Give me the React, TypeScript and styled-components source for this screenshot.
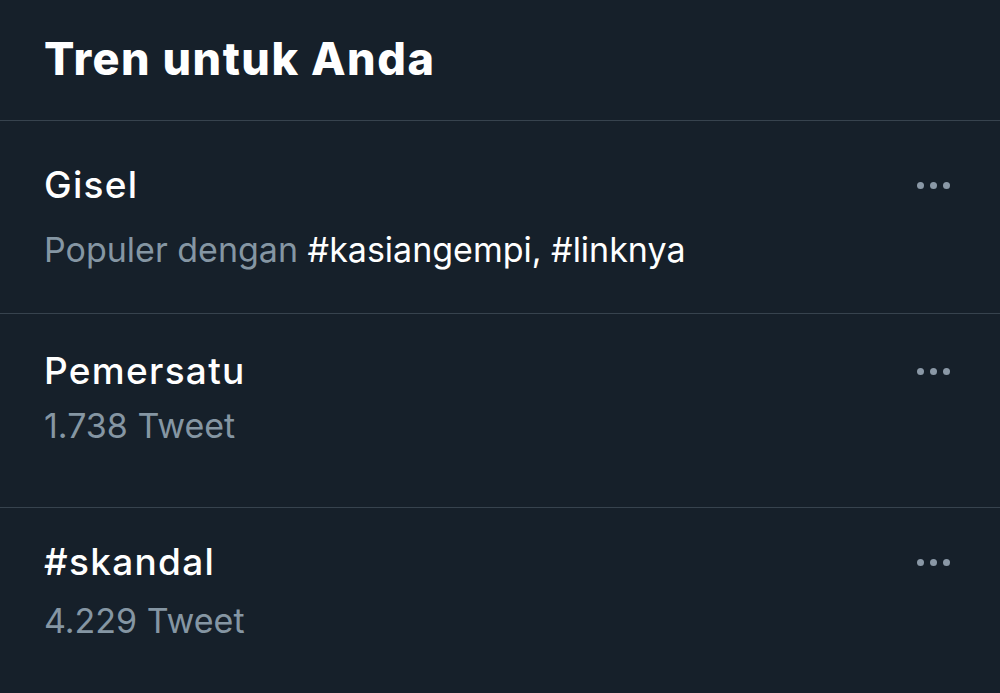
import React from "react";
import styled, { createGlobalStyle } from "styled-components";

const GlobalStyle = createGlobalStyle`
  html, body {
    margin: 0;
    padding: 0;
    background: #16202a;
  }
  body {
    font-family: Inter, "Liberation Sans", Arial, sans-serif;
    -webkit-font-smoothing: antialiased;
  }
`;

const Panel = styled.div`
  width: 1000px;
  height: 693px;
  overflow: hidden;
  background: #16202a;
  display: flex;
  flex-direction: column;
`;

const Header = styled.div`
  height: 121px;
  box-sizing: border-box;
  padding: 31px 44px 0;
  border-bottom: 1px solid #37434e;
  flex-shrink: 0;
`;

const HeaderTitle = styled.h1`
  margin: 0;
  font-size: 45px;
  line-height: 56px;
  font-weight: 800;
  color: #ffffff;
  letter-spacing: 1.5px;
`;

const Row = styled.div<{ $pt: number; $h?: number }>`
  height: ${(p) => (p.$h ? `${p.$h}px` : "auto")};
  flex: ${(p) => (p.$h ? "0 0 auto" : "1")};
  box-sizing: border-box;
  padding: ${(p) => p.$pt}px 50px 0 44px;
  border-bottom: ${(p) => (p.$h ? "1px solid #37434e" : "none")};
  display: flex;
  flex-direction: column;
`;

const TitleLine = styled.div`
  display: flex;
  align-items: center;
  justify-content: space-between;
  height: 44px;
`;

const Title = styled.div`
  font-size: 37px;
  line-height: 44px;
  font-weight: 500;
  color: #ffffff;
  letter-spacing: 1.3px;
`;

const Sub = styled.div<{ $mt: number }>`
  margin-top: ${(p) => p.$mt}px;
  font-size: 34px;
  line-height: 42px;
  font-weight: 400;
  color: #8596a3;
`;

const Tag = styled.span`
  color: #ffffff;
`;

const More = styled.div`
  display: flex;
  gap: 6px;
  align-items: center;
`;

const Dot = styled.span`
  width: 7px;
  height: 7px;
  border-radius: 50%;
  background: #8a98a6;
`;

const Dots = () => (
  <More>
    <Dot />
    <Dot />
    <Dot />
  </More>
);

export default function App() {
  return (
    <>
      <GlobalStyle />
      <Panel>
        <Header>
          <HeaderTitle>Tren untuk Anda</HeaderTitle>
        </Header>
        <Row $pt={42} $h={193}>
          <TitleLine>
            <Title>Gisel</Title>
            <Dots />
          </TitleLine>
          <Sub $mt={22}>
            Populer dengan <Tag>#kasiangempi, #linknya</Tag>
          </Sub>
        </Row>
        <Row $pt={35} $h={194}>
          <TitleLine>
            <Title>Pemersatu</Title>
            <Dots />
          </TitleLine>
          <Sub $mt={12}>1.738 Tweet</Sub>
        </Row>
        <Row $pt={32}>
          <TitleLine>
            <Title>#skandal</Title>
            <Dots />
          </TitleLine>
          <Sub $mt={16}>4.229 Tweet</Sub>
        </Row>
      </Panel>
    </>
  );
}
